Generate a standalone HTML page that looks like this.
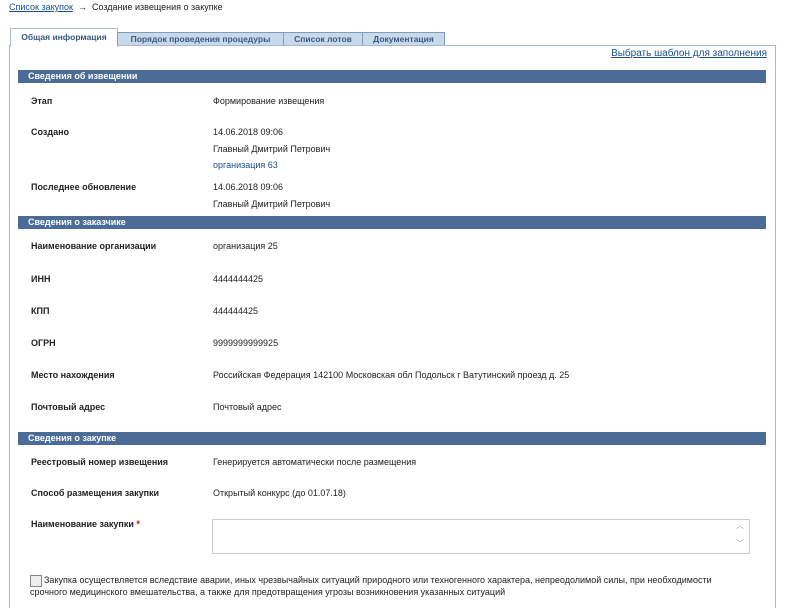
<!DOCTYPE html>
<html><head><meta charset="utf-8"><style>
html,body{margin:0;width:788px;height:608px;overflow:hidden}
body{background:#fff;font-family:"Liberation Sans",sans-serif;font-size:9px;color:#222;position:relative}
.a{position:absolute;white-space:nowrap}
a{color:#1a4f8a;text-decoration:underline}
.tab{position:absolute;top:32px;height:12px;border:1px solid #7f9db9;border-bottom:none;background:#c9d9ec;color:#3a5a80;font-weight:bold;text-align:center;line-height:12px;font-size:8.5px}
.bar{position:absolute;left:18px;width:748px;height:13px;background:#4a6c96;color:#fff;font-weight:bold;line-height:13px;padding-left:10px;box-sizing:border-box}
.l{position:absolute;left:31px;font-weight:bold;white-space:nowrap}
.v{position:absolute;left:213px;white-space:nowrap}
</style></head><body>
<div class="a" style="left:9px;top:2px"><a href="#">Список закупок</a> &nbsp;→&nbsp; Создание извещения о закупке</div>
<div style="position:absolute;left:9px;top:45px;width:765px;height:570px;border:1px solid #a9b8cc"></div>
<div style="position:absolute;left:10px;top:28px;width:106px;height:18px;border:1px solid #a9b8cc;border-bottom:none;background:#fff;color:#3a5a80;font-weight:bold;text-align:center;line-height:16px;font-size:8.5px">Общая информация</div>
<div class="tab" style="left:117px;width:165px">Порядок проведения процедуры</div>
<div class="tab" style="left:283px;width:78px">Список лотов</div>
<div class="tab" style="left:362px;width:81px">Документация</div>
<div class="a" style="right:21px;top:48px;font-size:10px"><a href="#">Выбрать шаблон для заполнения</a></div>
<div class="bar" style="top:70px">Сведения об извещении</div>
<div class="l" style="top:96px">Этап</div><div class="v" style="top:96px">Формирование извещения</div>
<div class="l" style="top:127px">Создано</div><div class="v" style="top:127px">14.06.2018 09:06</div>
<div class="v" style="top:144px">Главный Дмитрий Петрович</div>
<div class="v" style="top:160px;color:#1a4f8a">организация 63</div>
<div class="l" style="top:182px">Последнее обновление</div><div class="v" style="top:182px">14.06.2018 09:06</div>
<div class="v" style="top:199px">Главный Дмитрий Петрович</div>
<div class="bar" style="top:216px">Сведения о заказчике</div>
<div class="l" style="top:241px">Наименование организации</div><div class="v" style="top:241px">организация 25</div>
<div class="l" style="top:274px">ИНН</div><div class="v" style="top:274px">4444444425</div>
<div class="l" style="top:306px">КПП</div><div class="v" style="top:306px">444444425</div>
<div class="l" style="top:338px">ОГРН</div><div class="v" style="top:338px">9999999999925</div>
<div class="l" style="top:370px">Место нахождения</div><div class="v" style="top:370px">Российская Федерация 142100 Московская обл Подольск г Ватутинский проезд д. 25</div>
<div class="l" style="top:402px">Почтовый адрес</div><div class="v" style="top:402px">Почтовый адрес</div>
<div class="bar" style="top:432px">Сведения о закупке</div>
<div class="l" style="top:457px">Реестровый номер извещения</div><div class="v" style="top:457px">Генерируется автоматически после размещения</div>
<div class="l" style="top:488px">Способ размещения закупки</div><div class="v" style="top:488px">Открытый конкурс (до 01.07.18)</div>
<div class="l" style="top:519px">Наименование закупки <span style="color:#c00">*</span></div>
<div style="position:absolute;left:212px;top:519px;width:536px;height:33px;border:1px solid #ccc"></div>
<div class="a" style="left:736px;top:520px;color:#aaa;font-size:8px">︿</div>
<div class="a" style="left:736px;top:538px;color:#aaa;font-size:8px">﹀</div>
<div style="position:absolute;left:30px;top:575px;width:10px;height:10px;border:1px solid #888;background:#eee"></div>
<div class="a" style="left:44px;top:575px">Закупка осуществляется вследствие аварии, иных чрезвычайных ситуаций природного или техногенного характера, непреодолимой силы, при необходимости</div>
<div class="a" style="left:30px;top:587px">срочного медицинского вмешательства, а также для предотвращения угрозы возникновения указанных ситуаций</div>
</body></html>
